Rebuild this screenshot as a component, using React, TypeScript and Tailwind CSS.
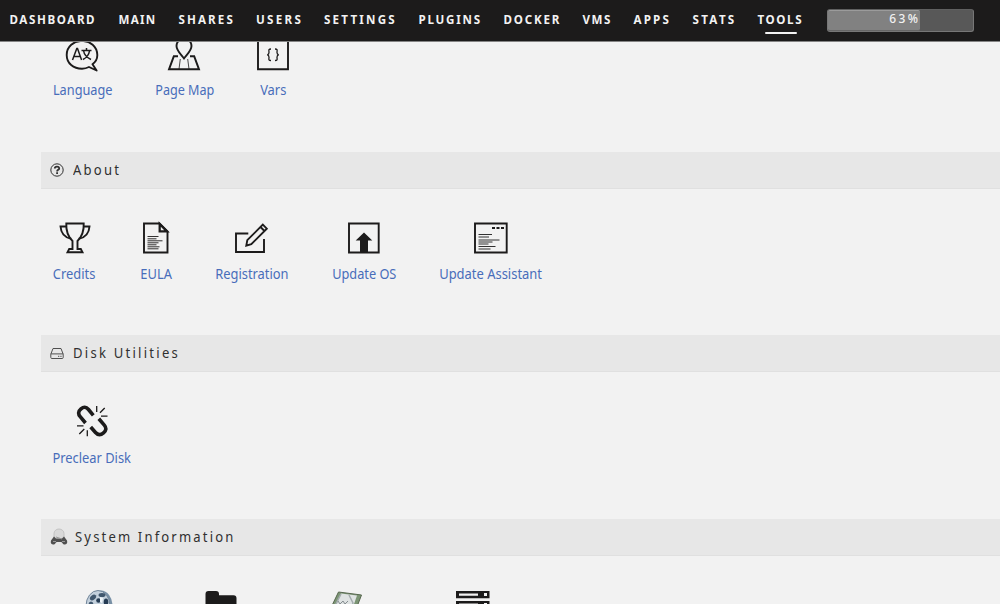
import type { ReactNode } from 'react';

const navItems: { label: string; box: string }[] = [
  { label: 'DASHBOARD', box: 'w-[109px] tracking-[1.6px]' },
  { label: 'MAIN', box: 'w-[60px] tracking-[1.3px]' },
  { label: 'SHARES', box: 'w-[77.5px] tracking-[2.1px]' },
  { label: 'USERS', box: 'w-[68px] tracking-[2.3px]' },
  { label: 'SETTINGS', box: 'w-[94.5px] tracking-[2.2px]' },
  { label: 'PLUGINS', box: 'w-[85px] tracking-[1.75px]' },
  { label: 'DOCKER', box: 'w-[79px] tracking-[1.8px]' },
  { label: 'VMS', box: 'w-[51px] tracking-[1.5px]' },
  { label: 'APPS', box: 'w-[59px] tracking-[2.2px]' },
  { label: 'STATS', box: 'w-[65px] tracking-[2.3px]' },
  { label: 'TOOLS', box: 'w-[69px] tracking-[1.6px]' },
];

function Icon({ children, className = 'h-9 w-9' }: { children: ReactNode; className?: string }) {
  return (
    <svg viewBox="0 0 36 36" className={className} fill="none" stroke="#1c1b1b" strokeWidth="1.9">
      {children}
    </svg>
  );
}

function Tool({ label, box, text, children }: { label: string; box: string; text: string; children: ReactNode }) {
  return (
    <a className={`flex shrink-0 flex-col items-center text-[#486dba] ${box}`}>
      {children}
      <span className={`text-[14px] leading-[18px] whitespace-nowrap ${text}`}>{label}</span>
    </a>
  );
}

function Title({ icon, label, text }: { icon: ReactNode; label: string; text: string }) {
  return (
    <div className="ml-[41px] flex h-[37px] shrink-0 items-center border-b border-[#e0e0e0] bg-[#e7e7e7] pl-[9px] text-[#303030]">
      {icon}
      <span className={`mb-[2px] origin-left scale-x-90 text-[14.5px] leading-5 whitespace-nowrap ${text}`}>{label}</span>
    </div>
  );
}

export default function App() {
  return (
    <div className="flex h-[604px] w-[1000px] flex-col overflow-hidden bg-[#f2f2f2] font-['Noto_Sans',sans-serif]">
      <header className="flex h-[42px] shrink-0 border-b border-[#858585] bg-[#1c1b1b] pl-[9.5px] text-[11.6px] font-bold text-[#f2f2f2]">
        {navItems.map(({ label, box }) => (
          <div key={label} className={`flex shrink-0 flex-col pt-[12px] leading-4 whitespace-nowrap ${box}`}>
            {label}
            {label === 'TOOLS' && <span className="mt-[4px] ml-[7px] h-[2px] w-[32px] rounded-sm bg-[#f2f2f2]" />}
          </div>
        ))}
        <div className="mt-[9px] h-[23px] w-[147px] shrink-0 rounded-[3px] border border-[#777] border-t-[#606060] bg-[#585858]">
          <div className="h-[21px] w-[92px] rounded-[2px] border-t border-b border-t-[#9b9b9b] border-b-[#666] bg-[#818181] text-right text-[12px] leading-[16px] font-medium text-[#f2f2f2]">
            <span className="tracking-[2.4px] -mr-[1px]">63%</span>
          </div>
        </div>
      </header>

      <section className="flex h-[110px] shrink-0 overflow-hidden pl-[53px]">
        <Tool label="Language" box="w-[59px] mr-[43px] -mt-[5px]" text="mt-[8px] scale-x-[0.91]">
          <Icon className="-ml-[1px] h-9 w-9">
            <path d="M28.5 27.3c3-2.3 5-5.900 4.800-9.600C33 9.500 26.300 4 18 4S2.700 9.500 2.700 18 9.500 31.700 18 31.700c2.500 0 4.900-.6 7-1.700l7.600 3.500z" strokeLinejoin="round" />
            <path d="m8.500 23 4.300-11.500h.7L17.600 23M10 19.500h6.500M17.500 13.500h10M22.500 11v2.500M19 22.500c4-2 6-5 6.600-9M19.500 13.500c.6 4 3 7 7.500 9" strokeWidth="1.500" />
          </Icon>
        </Tool>
        <Tool label="Page Map" box="w-[59px] mr-[46px] -mt-[5px]" text="mt-[8px] scale-x-[0.9]">
          <Icon className="-ml-[1px] h-9 w-9">
            <path d="M18 21.500c-3-4-7.500-8-7.500-12.500a7.500 7.500 0 0 1 15 0C25.500 13.500 21 17.500 18 21.500Z" />
            <path d="M12 19.300H7.800L3 32.300h30l-4.800-13H24" />
            <path d="M14.300 22 13 32M21.700 22 23 32" strokeWidth=".8" />
          </Icon>
        </Tool>
        <Tool label="Vars" box="w-[27px] -mt-[5px]" text="mt-[8px] scale-x-[0.92]">
          <Icon className="-ml-[1px] h-9 w-9 shrink-0">
            <path d="M3 3h30v29.300H3z" />
            <path d="M16 12c-3 0-2 1.500-2 3.500 0 1.500-.5 2-1.700 2.300 1.200.3 1.700.8 1.700 2.400 0 2-1 3.300 2 3.300M20 12c3 0 2 1.500 2 3.500 0 1.500.5 2 1.700 2.300-1.200.3-1.700.8-1.700 2.400 0 2 1 3.300-2 3.300" strokeWidth="1.300" />
          </Icon>
        </Tool>
      </section>

      <Title
        label="About"
        text="tracking-[2.5px]"
        icon={
          <svg viewBox="0 0 14 14" className="mr-[9px] h-[14px] w-[14px]" fill="none" stroke="#303030">
            <circle cx="7" cy="7" r="6.200" />
            <path d="M4.800 5.500c0-2.500 4.400-2.500 4.400-.1C9.200 7 7.100 6.700 7.100 8.400M7.100 9.300V11" strokeWidth="1.800" />
          </svg>
        }
      />
      <section className="flex h-[146px] shrink-0 pt-[31px] pl-[53px]">
        <Tool label="Credits" box="w-[43px] mr-[44px]" text="mt-[9px] scale-x-[0.92]">
          <Icon>
            <path d="M9.300 3.500h17.400c.4 8-1.700 13-6.200 17.500v8h3.300l1.700 3.300h-15l1.700-3.300h3.300v-8C11 16.500 8.900 11.500 9.300 3.500Z" />
            <path d="M9.300 6.500H3.500c.5 7 4 11 10.700 12.300M26.700 6.500h5.800c-.5 7-4 11-10.700 12.300" />
          </Icon>
        </Tool>
        <Tool label="EULA" box="w-[32px] mr-[43px]" text="mt-[9px] scale-x-[0.92]">
          <Icon className="h-9 w-9 shrink-0">
            <path d="M6 3.500h15.500l8 8v21H6z" />
            <path d="M21.500 3.500v8h8z" fill="#1c1b1b" />
            <path d="M22.800 6.800v3.400h3.400z" fill="#f2f2f2" stroke="none" />
            <path d="M9.500 16.500h11M9.500 18.800h9M9.500 20.800h15M9.500 22.800h11M9.500 24.800h9M9.500 26.800h12M9.500 28.800h11" strokeWidth=".9" />
          </Icon>
        </Tool>
        <Tool label="Registration" box="w-[73px] mr-[44px]" text="mt-[9px] scale-x-[0.92]">
          <Icon className="-ml-[1px] h-9 w-9">
            <path d="M15.300 13.500H3v18.500h28V19" />
            <path d="m14.300 20.200 15.500-15.500 4 4-15.500 15.500-5 1.500zM27.500 7l4 4" />
          </Icon>
        </Tool>
        <Tool label="Update OS" box="w-[64px] mr-[44px]" text="mt-[9px] scale-x-[0.91]">
          <Icon>
            <path d="M3 3.500h29.700v29H3z" />
            <path d="m18 12.500 8.300 8H22V32h-8V20.500H9.700z" fill="#1c1b1b" stroke="none" />
          </Icon>
        </Tool>
        <Tool label="Update Assistant" box="w-[102px]" text="mt-[9px] scale-x-[0.925]">
          <Icon>
            <path d="M2 3.500h31.700v29H2z" />
            <path d="M19 8h3M23.500 8h3M28 8h3" strokeWidth="2" />
            <path d="M5.500 14.500H19M5.500 17h10.500M5.500 20h21M5.500 22h14M5.500 24h10M5.500 26.500h17M5.500 29h12" strokeWidth=".9" />
          </Icon>
        </Tool>
      </section>

      <Title
        label="Disk Utilities"
        text="tracking-[2.5px]"
        icon={
          <svg viewBox="0 0 14 14" className="mr-[9px] h-[14px] w-[14px]" fill="none" stroke="#505050">
            <path d="M3 2.500h8l2.200 5.700v3.300c0 .7-.4 1-1 1H1.800c-.6 0-1-.3-1-1V8.200zM.8 7.900h12.400M8 10.300h1.300M10.300 10.300h1.300" />
          </svg>
        }
      />
      <section className="flex h-[147px] shrink-0 pt-[31px] pl-[53px]">
        <Tool label="Preclear Disk" box="w-[78px]" text="mt-[10px] scale-x-[0.92]">
          <Icon>
            <path
              d="M19.300 12.300 14.500 6.500c-2.500-3-5-2.800-7.500-.6-2.700 2.300-3.200 5-.8 7.800l5.300 6.300M24.800 15.800l5.500 6.300c2.400 2.800 1.900 5.500-.8 7.800-2.500 2.200-5.500 2.400-8-.4l-4.800-5.500"
              strokeWidth="3.600"
            />
            <path d="M22.700 9V3M26 9.800 30.700 5M27 13.200h6.500M13.300 27.200v6M10.300 26 5.300 31M9.500 22.800H3" strokeWidth="1.300" />
          </Icon>
        </Tool>
      </section>

      <Title
        label="System Information"
        text="tracking-[2.4px]"
        icon={
          <svg viewBox="0 0 18 18" className="mr-[7px] h-[18px] w-[18px]" fill="none">
            <path d="M4 9V5.500a5 4.500 0 0 1 10 0V12H4z" fill="#d9d9d9" stroke="#bbb" strokeWidth=".8" />
            <path d="m4 8.500-3 4c-1 3 1 4.500 3 4 1.500-.5 1.800-2.500 3-2.500h4c1.200 0 1.500 2 3 2.500 2 .5 4-1 3-4l-3-4-2 2H6z" fill="#505050" />
            <path d="M3 13.500h3M12 13.500h3M6 9l6 2" stroke="#999" />
          </svg>
        }
      />
      <section className="flex h-[48px] shrink-0 overflow-hidden pt-[32px] pl-[81px]">
        <svg viewBox="0 0 36 36" className="mr-[86px] h-9 w-9 shrink-0">
          <ellipse cx="20" cy="18" rx="11.500" ry="15.500" fill="#7890a6" />
          <ellipse cx="17" cy="18" rx="12" ry="15.500" fill="#c3d0dc" stroke="#718599" />
          <ellipse cx="12" cy="9.500" rx="3.500" ry="2.300" fill="#40576e" transform="rotate(-40 12 9.500)" />
          <ellipse cx="21" cy="7" rx="3.500" ry="2" fill="#40576e" />
          <ellipse cx="25" cy="14" rx="2.300" ry="3.500" fill="#263c54" />
          <circle cx="17.500" cy="12.500" r="2.300" fill="#263c54" />
          <ellipse cx="10" cy="17" rx="2.500" ry="3.500" fill="#40576e" />
          <path d="m19 9 3 1-1 5-2-1z" fill="#eef4f8" />
        </svg>
        <svg viewBox="0 0 36 36" className="mr-[89px] h-9 w-9 shrink-0" fill="#1c1b1b">
          <path d="M2.500 6a3 3 0 0 1 3-3H13a3 3 0 0 1 3 3v1.300h14.500a3 3 0 0 1 3 3V30h-31z" />
        </svg>
        <svg viewBox="0 0 36 36" className="mr-[91px] h-9 w-9 shrink-0">
          <path d="m10.500 4 23 3-10 26L-1 28z" fill="#7c9575" stroke="#57674f" />
          <path d="m13 5.500 16 2-8 23-17-4z" fill="#dfe3e3" />
          <path d="m21 7 4 8-4 12M13 6 7 18" fill="none" stroke="#a5adaf" strokeWidth="1.500" />
          <path d="m10 13 2 3 3-3 2 3 3-3" fill="none" stroke="#858d90" />
        </svg>
        <svg viewBox="0 0 36 36" className="h-9 w-9 shrink-0">
          <path d="M1 3h33.500v7.200H1zM1 13h33.500v7H1zM1 23h33.500v7H1z" fill="#1c1b1b" />
          <path d="M4 5.500h19v2.200H4zM4 15.500h19v2H4zM4 25.500h19v2H4z" fill="#f2f2f2" />
          <path d="M29 5h3v3h-3zM29 15h3v3h-3zM29 25h3v3h-3z" fill="#f2f2f2" />
        </svg>
      </section>
    </div>
  );
}
